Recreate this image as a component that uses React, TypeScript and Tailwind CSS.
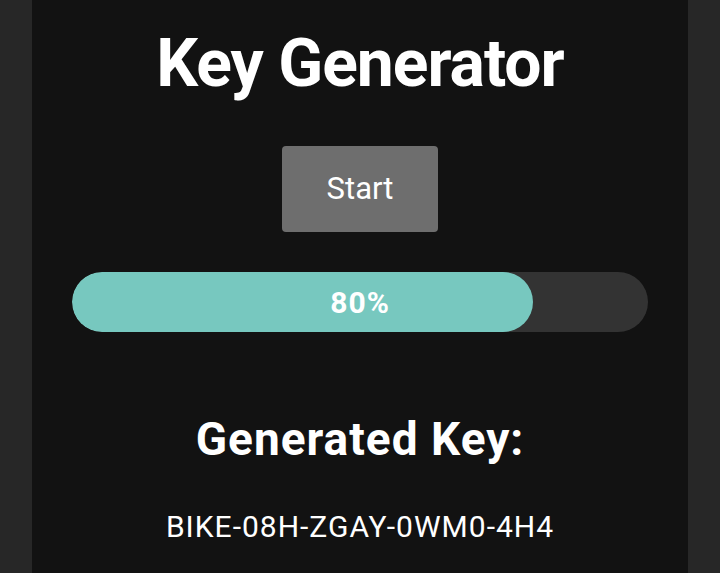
import React, { useState } from 'react';

const App = () => {
  const [progress] = useState(80);
  const [generatedKey] = useState('BIKE-08H-ZGAY-0WM0-4H4');

  return (
    <div className="min-h-[573px] bg-[#272727] px-8" style={{ fontFamily: 'Roboto, "Noto Sans", sans-serif' }}>
      <div className="min-h-[573px] bg-[#121212] px-10 flex flex-col items-center text-white">
        <h1 className="mt-[26px] text-[66px] leading-[76px] font-bold tracking-[-1px]">Key Generator</h1>

        {/* Botón de inicio */}
        <button className="mt-[44px] w-[156px] h-[86px] bg-[#6e6e6e] rounded-[4px] text-[31px] text-white">
          Start
        </button>

        {/* Barra de progreso */}
        <div className="mt-[40px] w-full h-[60px] bg-[#333333] rounded-full relative overflow-hidden">
          <div className="h-full bg-[#77c8bf] rounded-full" style={{ width: `${progress}%` }}></div>
          <div className="absolute inset-0 flex items-center justify-center text-[30px] font-bold tracking-[1px]">
            {progress}%
          </div>
        </div>

        <h2 className="mt-[81px] text-[46px] leading-[52px] font-bold tracking-[1px]">Generated Key:</h2>
        <p className="mt-[39px] text-[30px] leading-[45px] tracking-[1px]">{generatedKey}</p>
      </div>
    </div>
  );
};

export default App;
